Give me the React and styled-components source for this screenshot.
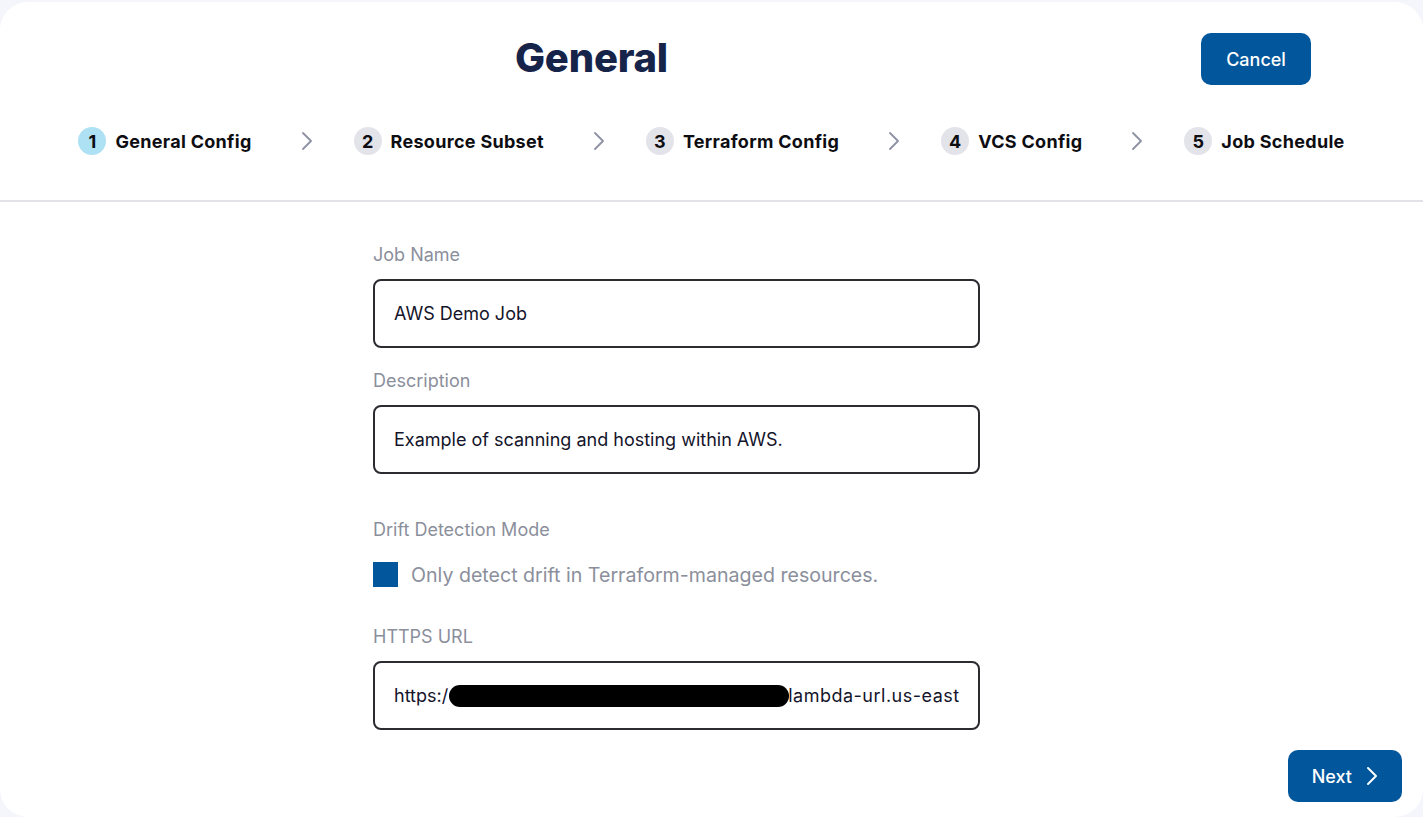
import React from 'react';
import styled, { createGlobalStyle } from 'styled-components';

const GlobalStyle = createGlobalStyle`
  html, body {
    margin: 0;
    padding: 0;
    background: #f4f6fb;
    font-family: Inter, "Noto Sans", "Liberation Sans", sans-serif;
  }
  * { box-sizing: border-box; }
`;

const Card = styled.div`
  margin-top: 2px;
  min-height: 815px;
  background: #ffffff;
  border-radius: 28px;
  display: flex;
  flex-direction: column;
`;

const Header = styled.header`
  padding-top: 31px;
  border-bottom: 2px solid #e2e2e8;
  padding-bottom: 44px;
`;

const TopRow = styled.div`
  display: flex;
  align-items: center;
  height: 52px;
`;

const Title = styled.h1`
  flex: 1;
  margin: -4px 0 0;
  text-align: center;
  font-size: 40px;
  font-weight: 800;
  color: #17244a;
  letter-spacing: -0.2px;
`;

const PrimaryButton = styled.button`
  display: inline-flex;
  align-items: center;
  justify-content: center;
  gap: 14px;
  height: 52px;
  padding: 0 ${p => p.$px || 26}px;
  border: none;
  border-radius: 10px;
  background: #02569b;
  color: #ffffff;
  font-family: inherit;
  font-size: 18px;
  font-weight: 500;
  cursor: pointer;
`;

const CancelButton = styled(PrimaryButton)`
  width: 110px;
  margin: 0 112px 0 18px;
`;

const Steps = styled.nav`
  display: flex;
  align-items: center;
  justify-content: center;
  margin-top: 41px;
  height: 30px;
`;

const Step = styled.div`
  display: flex;
  align-items: center;
  gap: 9px;
`;

const StepNumber = styled.span`
  display: inline-flex;
  align-items: center;
  justify-content: center;
  width: 28px;
  height: 28px;
  border-radius: 50%;
  background: ${p => (p.$active ? '#aee1f3' : '#e3e3ea')};
  font-size: 18px;
  font-weight: 700;
  color: #0d0d12;
`;

const StepLabel = styled.span`
  font-size: 18px;
  font-weight: 700;
  letter-spacing: 0.3px;
  color: #0d0d12;
`;

const StepArrow = styled.span`
  display: inline-flex;
  margin: 0 41px 0 49px;
  color: #8d91a2;
`;

const Body = styled.main`
  flex: 1;
  width: 677px;
  margin: 0 auto;
  padding-top: 42px;
`;

const Field = styled.div`
  width: 607px;
  margin-top: ${p => p.$gap || 0}px;
`;

const Label = styled.div`
  font-size: 18px;
  line-height: 22px;
  color: #8b8f9c;
`;

const InputBox = styled.div`
  margin-top: 13px;
  height: 69px;
  border: 2px solid #2b2b30;
  border-radius: 8px;
  padding: 0 19px;
  display: flex;
  align-items: center;
  overflow: hidden;
  white-space: nowrap;
  font-size: 18px;
  color: #14142a;
`;

const Redacted = styled.span`
  display: inline-block;
  flex: none;
  width: 340px;
  height: 22px;
  margin: 0 -1px 0 1px;
  background: #000;
  border-radius: 11px;
`;

const UrlTail = styled.span`
  letter-spacing: 0.5px;
`;

const CheckRow = styled.label`
  display: flex;
  align-items: center;
  gap: 13px;
  margin-top: 21px;
  height: 25px;
  font-size: 19.6px;
  color: #8b8f9c;
`;

const CheckBox = styled.span`
  width: 25px;
  height: 25px;
  background: #02569b;
  flex: none;
`;

const Footer = styled.footer`
  display: flex;
  justify-content: flex-end;
  padding: 20px 21px 15px;
`;

const Chevron = ({ color = 'currentColor', width = 2 }) => (
  <svg width="12" height="20" viewBox="0 0 12 20" fill="none">
    <path d="M2 2 L10 10 L2 18" stroke={color} strokeWidth={width} strokeLinecap="round" strokeLinejoin="round" />
  </svg>
);

const steps = ['General Config', 'Resource Subset', 'Terraform Config', 'VCS Config', 'Job Schedule'];

export default function App() {
  return (
    <>
      <GlobalStyle />
      <Card>
        <Header>
          <TopRow>
            <Title>General</Title>
            <CancelButton>Cancel</CancelButton>
          </TopRow>
          <Steps>
            {steps.map((s, i) => (
              <React.Fragment key={s}>
                {i > 0 && (
                  <StepArrow>
                    <Chevron width={1.8} />
                  </StepArrow>
                )}
                <Step>
                  <StepNumber $active={i === 0}>{i + 1}</StepNumber>
                  <StepLabel>{s}</StepLabel>
                </Step>
              </React.Fragment>
            ))}
          </Steps>
        </Header>

        <Body>
          <Field>
            <Label>Job Name</Label>
            <InputBox>AWS Demo Job</InputBox>
          </Field>
          <Field $gap={22}>
            <Label>Description</Label>
            <InputBox>Example of scanning and hosting within AWS.</InputBox>
          </Field>
          <Field $gap={45}>
            <Label>Drift Detection Mode</Label>
            <CheckRow>
              <CheckBox />
              Only detect drift in Terraform-managed resources.
            </CheckRow>
          </Field>
          <Field $gap={39}>
            <Label>HTTPS URL</Label>
            <InputBox>
              https:/
              <Redacted />
              <UrlTail>lambda-url.us-east</UrlTail>
            </InputBox>
          </Field>
        </Body>

        <Footer>
          <PrimaryButton $px={24}>
            Next
            <Chevron color="#ffffff" width={2} />
          </PrimaryButton>
        </Footer>
      </Card>
    </>
  );
}
